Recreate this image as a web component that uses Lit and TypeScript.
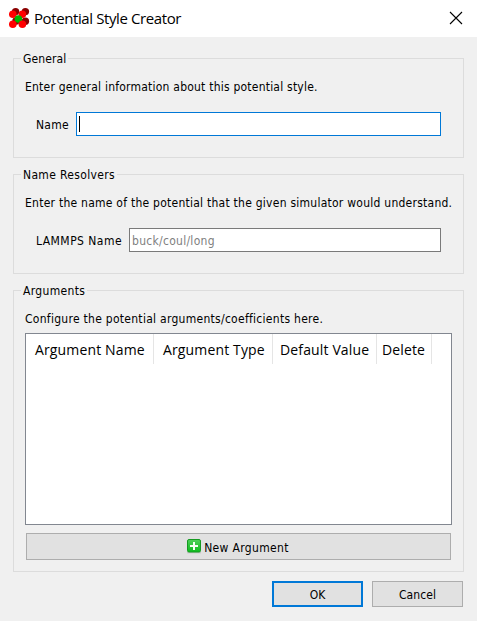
import { LitElement, html, css } from "lit";
import { customElement } from "lit/decorators.js";

@customElement("app-root")
export class AppRoot extends LitElement {
  static styles = css`
    :host {
      display: flex;
      flex-direction: column;
      height: 621px;
      width: 477px;
      background: #f0f0f0;
      color: #000;
      font: 12px/16px "DejaVu Sans Condensed", "Noto Sans", sans-serif;
      overflow: hidden;
      white-space: nowrap;
    }
    * { box-sizing: border-box; }
    .titlebar {
      display: flex;
      align-items: center;
      height: 37px;
      padding: 0 14px 1px 8px;
      background: #fff;
      font: 15px/20px "Open Sans", "Noto Sans", sans-serif;
      letter-spacing: -0.4px;
    }
    .logo { display: block; width: 22px; height: 22px; }
    .title { flex: 1; margin-left: 4px; }
    .close { display: block; width: 14px; height: 14px; }
    .body { display: flex; flex-direction: column; padding: 21px 13px 0; }
    .group {
      display: flex;
      flex-direction: column;
      width: 451px;
      height: 100px;
      border: 1px solid #dcdcdc;
      margin-bottom: 16px;
      padding: 0 11px;
    }
    .group.tall { height: 282px; margin-bottom: 9px; }
    .legend {
      align-self: flex-start;
      height: 16px;
      margin: -8px 0 0 -4px;
      padding: 0 2px;
      background: #f0f0f0;
    }
    .hint { margin-top: 12px; height: 16px; }
    .row { display: flex; align-items: center; height: 24px; margin: 17px 11px 0; }
    .label { padding-top: 2px; }
    .label.short { width: 40px; letter-spacing: 0.25px; }
    .label.long { width: 93px; letter-spacing: 0.46px; }
    .ls1 { letter-spacing: 0.1px; }
    .ls2 { letter-spacing: 0.22px; }
    .ls3 { letter-spacing: 0.25px; }
    .ls4 { letter-spacing: 0.28px; }
    .ls5 { letter-spacing: 0.34px; }
    .field {
      flex: 1;
      display: flex;
      align-items: center;
      height: 24px;
      border: 1px solid #7a7a7a;
      background: #fff;
      padding-left: 2px;
      color: #808080;
    }
    .field.active { border-color: #0078d7; }
    .caret { width: 1px; height: 16px; background: #000; }
    .table {
      width: 427px;
      height: 192px;
      margin: 6px 0 0 0;
      border: 1px solid #828790;
      background: #fff;
    }
    .head {
      display: flex;
      height: 30px;
      font: 14px/32px "Open Sans", "Noto Sans", sans-serif;
      letter-spacing: 0.14px;
    }
    .cell { border-right: 1px solid #e5e5e5; }
    .c1 { width: 128px; padding-left: 9px; }
    .c2 { width: 119px; padding-left: 9px; }
    .c3 { width: 104px; padding-left: 7px; }
    .c4 { width: 55px; padding-left: 5px; }
    .button {
      display: flex;
      align-items: center;
      justify-content: center;
      width: 91px;
      height: 26px;
      border: 1px solid #adadad;
      background: #e1e1e1;
    }
    .button.primary { border: 2px solid #0078d7; }
    .button.wide { width: 425px; height: 27px; margin: 8px 0 0 1px; padding-right: 2px; gap: 2px; }
    .plus { display: block; width: 16px; height: 16px; margin-top: -1px; }
    .footer { display: flex; justify-content: flex-end; gap: 9px; width: 450px; }
  `;

  render() {
    return html`
      <div class="titlebar">
        <svg class="logo" viewBox="0 0 22 22">
          <g fill="#8b0000">
            <circle cx="7.6" cy="4.6" r="3.7" /><circle cx="17.4" cy="4.6" r="3.7" />
            <circle cx="17.4" cy="14.2" r="3.7" /><circle cx="8" cy="14" r="3.7" />
          </g>
          <g fill="#f00">
            <circle cx="4.8" cy="7.3" r="3.8" /><circle cx="14.4" cy="7.3" r="3.8" />
          </g>
          <circle cx="10.4" cy="12" r="3.8" fill="#00b400" />
          <g fill="#f00">
            <circle cx="4.8" cy="17.2" r="3.8" /><circle cx="14.4" cy="17.2" r="3.8" />
          </g>
        </svg>
        <span class="title">Potential Style Creator</span>
        <svg class="close" viewBox="0 0 14 14"><path d="M1 1L13 13M13 1L1 13" stroke="#000" stroke-width="1.1" /></svg>
      </div>
      <div class="body">
        <div class="group">
          <span class="legend ls1">General</span>
          <span class="hint ls2">Enter general information about this potential style.</span>
          <div class="row">
            <span class="label short">Name</span>
            <div class="field active"><span class="caret"></span></div>
          </div>
        </div>
        <div class="group">
          <span class="legend ls5">Name Resolvers</span>
          <span class="hint ls3">Enter the name of the potential that the given simulator would understand.</span>
          <div class="row">
            <span class="label long">LAMMPS Name</span>
            <div class="field"><span class="label ls4">buck/coul/long</span></div>
          </div>
        </div>
        <div class="group tall">
          <span class="legend ls5">Arguments</span>
          <span class="hint ls4">Configure the potential arguments/coefficients here.</span>
          <div class="table">
            <div class="head">
              <span class="cell c1">Argument Name</span>
              <span class="cell c2">Argument Type</span>
              <span class="cell c3">Default Value</span>
              <span class="cell c4">Delete</span>
            </div>
          </div>
          <div class="button wide">
            <svg class="plus" viewBox="0 0 16 16">
              <defs><linearGradient id="g" x1="0" y1="0" x2="0" y2="1"><stop offset="0" stop-color="#4fd05a" /><stop offset="1" stop-color="#0cbc1c" /></linearGradient></defs>
              <rect x="1" y="14" width="14" height="1.3" fill="#c4c4c4" />
              <rect x="1.5" y="1.5" width="13" height="12.5" rx="1.5" fill="url(#g)" stroke="#169a22" />
              <path d="M8 4V12M4 8H12" stroke="#f4fff4" stroke-width="2" />
            </svg>
            <span class="label ls5">New Argument</span>
          </div>
        </div>
        <div class="footer">
          <div class="button primary"><span class="label">OK</span></div>
          <div class="button"><span class="label ls1">Cancel</span></div>
        </div>
      </div>
    `;
  }
}
